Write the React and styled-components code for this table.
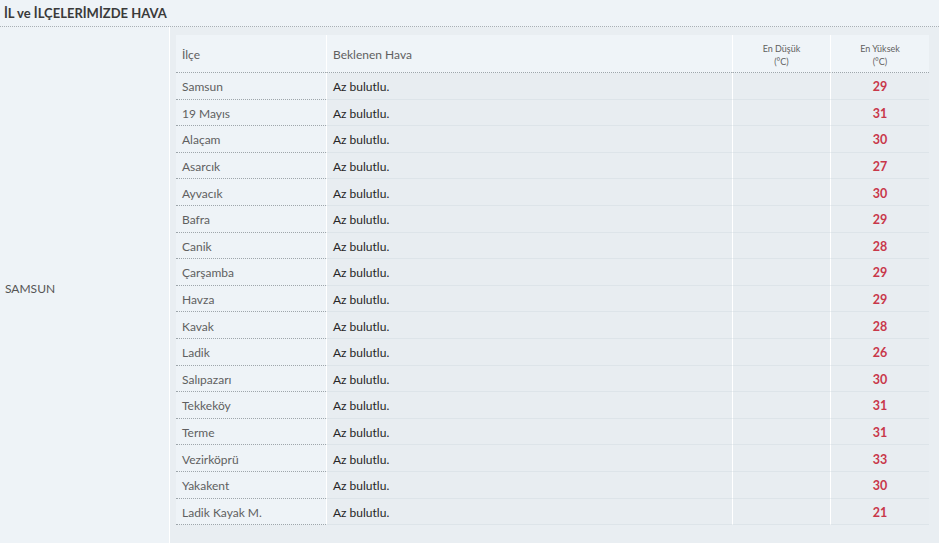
import React from "react";
import styled, { createGlobalStyle } from "styled-components";

const GlobalStyle = createGlobalStyle`
  html, body {
    margin: 0;
    padding: 0;
    background: #eef3f7;
  }
  body {
    font-family: "Segoe UI", Lato, "Liberation Sans", sans-serif;
    font-size: 12px;
  }
`;

const districts = [
  ["Samsun", 29],
  ["19 Mayıs", 31],
  ["Alaçam", 30],
  ["Asarcık", 27],
  ["Ayvacık", 30],
  ["Bafra", 29],
  ["Canik", 28],
  ["Çarşamba", 29],
  ["Havza", 29],
  ["Kavak", 28],
  ["Ladik", 26],
  ["Salıpazarı", 30],
  ["Tekkeköy", 31],
  ["Terme", 31],
  ["Vezirköprü", 33],
  ["Yakakent", 30],
  ["Ladik Kayak M.", 21],
];

const Panel = styled.div`
  width: 939px;
  height: 543px;
  overflow: hidden;
  background: #eef3f7;
`;

const Title = styled.div`
  height: 27px;
  box-sizing: border-box;
  padding: 5px 4px 0;
  font-size: 13px;
  font-weight: 700;
  color: #3a3a3a;
  border-bottom: 1px dotted #a9b0b5;
`;

const Body = styled.div`
  display: flex;
  height: 522px;
`;

const CityCell = styled.div`
  width: 170px;
  flex-shrink: 0;
  display: flex;
  align-items: center;
  padding-left: 5px;
  box-sizing: border-box;
  color: #555;
  font-size: 12px;
  border-right: 1px solid #ffffff;
`;

const TableCell = styled.div`
  flex: 1;
  background: #e9eef2;
  padding: 8px 8px 0 6px;
`;

const Row = styled.div`
  display: grid;
  grid-template-columns: 150px 406px 98px 99px;
  height: ${(p) => (p.$head ? "38px" : "26.6px")};
`;

const Cell = styled.div`
  display: flex;
  align-items: center;
  justify-content: ${(p) => (p.$center ? "center" : "flex-start")};
  padding-left: ${(p) => (p.$center ? "0" : "6px")};
  padding-top: 2px;
  box-sizing: border-box;
  text-align: center;
  background: ${(p) => (p.$head ? "#eff4f8" : p.$first ? "#eef3f7" : "#e8edf1")};
  border-left: ${(p) => (p.$first ? "none" : "1px solid #ffffff")};
  border-bottom: ${(p) =>
    p.$head || p.$first ? "1px dotted #9ea6ab" : "1px solid #dde4e9"};
  color: ${(p) => (p.$dark ? "#262626" : "#5f5f5f")};
  font-size: ${(p) => (p.$small ? "9px" : "12px")};
  line-height: ${(p) => (p.$small ? "13px" : "normal")};
`;

const Max = styled.span`
  color: #c8374a;
  font-weight: 700;
  font-size: 12.5px;
`;

export default function App() {
  return (
    <>
      <GlobalStyle />
      <Panel>
        <Title>İL ve İLÇELERİMİZDE HAVA</Title>
        <Body>
          <CityCell>SAMSUN</CityCell>
          <TableCell>
            <Row $head>
              <Cell $head $first>İlçe</Cell>
              <Cell $head>Beklenen Hava</Cell>
              <Cell $head $center $small>
                En Düşük
                <br />
                (°C)
              </Cell>
              <Cell $head $center $small>
                En Yüksek
                <br />
                (°C)
              </Cell>
            </Row>
            {districts.map(([name, max]) => (
              <Row key={name}>
                <Cell $first>{name}</Cell>
                <Cell $dark>Az bulutlu.</Cell>
                <Cell $center />
                <Cell $center>
                  <Max>{max}</Max>
                </Cell>
              </Row>
            ))}
          </TableCell>
        </Body>
      </Panel>
    </>
  );
}
